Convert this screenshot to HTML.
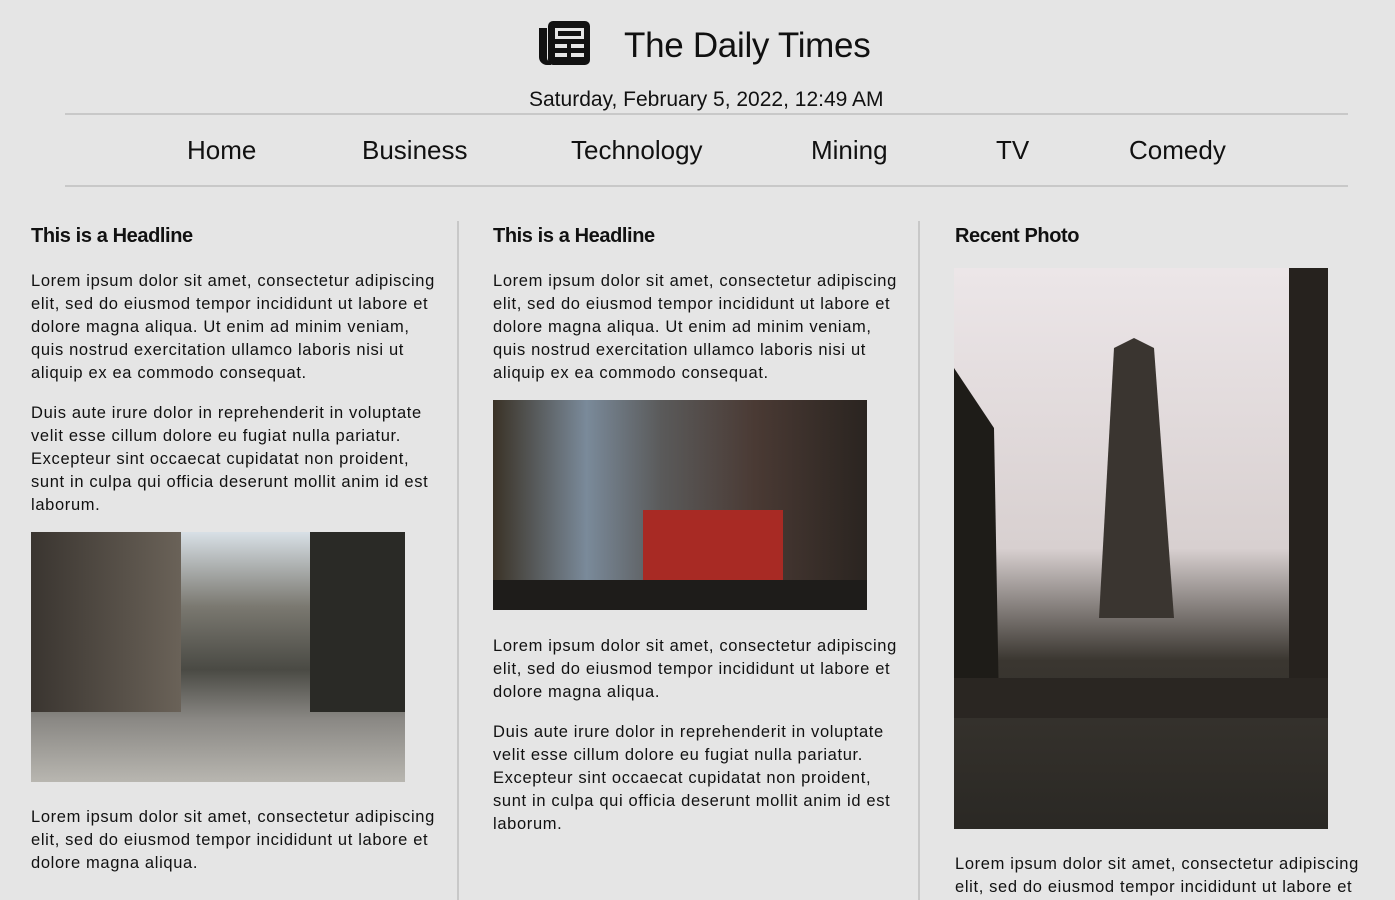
<!DOCTYPE html>
<html><head><meta charset="utf-8"><style>
body{margin:0;background:#e5e5e5;font-family:"Liberation Sans",sans-serif;color:#111;width:1395px;height:900px;overflow:hidden;position:relative}
.a{position:absolute;white-space:nowrap}
.hl{font-size:20px;font-weight:bold;letter-spacing:-0.4px}
.p{font-size:16.5px;line-height:23px;letter-spacing:0.65px}
.nav{font-size:26px;top:135px}
.line{position:absolute;left:65px;width:1283px;height:2px;background:#c8c8c8}
.vd{position:absolute;width:2px;background:#c8c8c8;top:221px;height:679px}
</style></head><body>
<svg class="a" style="left:538px;top:20px" width="53" height="46" viewBox="0 0 53 46">
<rect x="10" y="1" width="42" height="44" rx="5" fill="#111"/>
<path d="M1 8 h8 v30 a4 4 0 0 0 4 4 v3 h-4 a8 8 0 0 1 -8 -8 z" fill="#111"/>
<rect x="17" y="8" width="29" height="11" fill="#e5e5e5"/>
<rect x="20" y="11" width="23" height="5" fill="#111"/>
<rect x="17" y="24" width="12" height="4" fill="#e5e5e5"/><rect x="33" y="24" width="13" height="4" fill="#e5e5e5"/>
<rect x="17" y="33" width="12" height="4" fill="#e5e5e5"/><rect x="33" y="33" width="13" height="4" fill="#e5e5e5"/>
</svg>
<div class="a" style="left:624px;top:26px;font-size:35px;letter-spacing:-0.3px">The Daily Times</div>
<div class="a" style="left:529px;top:88px;font-size:21px">Saturday, February 5, 2022, 12:49 AM</div>
<div class="line" style="top:113px"></div>
<div class="line" style="top:185px"></div>
<div class="a nav" style="left:187px">Home</div>
<div class="a nav" style="left:362px">Business</div>
<div class="a nav" style="left:571px">Technology</div>
<div class="a nav" style="left:811px">Mining</div>
<div class="a nav" style="left:996px">TV</div>
<div class="a nav" style="left:1129px">Comedy</div>
<div class="vd" style="left:457px"></div><div class="vd" style="left:918px"></div>

<div class="a hl" style="left:31px;top:225px">This is a Headline</div>
<div class="a p" style="left:31px;top:270px">Lorem ipsum dolor sit amet, consectetur adipiscing<br>elit, sed do eiusmod tempor incididunt ut labore et<br>dolore magna aliqua. Ut enim ad minim veniam,<br>quis nostrud exercitation ullamco laboris nisi ut<br>aliquip ex ea commodo consequat.</div>
<div class="a p" style="left:31px;top:402px">Duis aute irure dolor in reprehenderit in voluptate<br>velit esse cillum dolore eu fugiat nulla pariatur.<br>Excepteur sint occaecat cupidatat non proident,<br>sunt in culpa qui officia deserunt mollit anim id est<br>laborum.</div>
<div class="a" style="left:31px;top:532px;width:374px;height:250px;background:linear-gradient(180deg,#d8e0e6 0%,#7a7870 30%,#4a4a44 55%,#8a8884 75%,#b8b6b0 100%)"><div style="position:absolute;left:0;top:0;width:150px;height:180px;background:linear-gradient(90deg,#3a3530,#6a6258)"></div><div style="position:absolute;right:0;top:0;width:95px;height:180px;background:#2a2a26"></div></div>
<div class="a p" style="left:31px;top:806px">Lorem ipsum dolor sit amet, consectetur adipiscing<br>elit, sed do eiusmod tempor incididunt ut labore et<br>dolore magna aliqua.</div>

<div class="a hl" style="left:493px;top:225px">This is a Headline</div>
<div class="a p" style="left:493px;top:270px">Lorem ipsum dolor sit amet, consectetur adipiscing<br>elit, sed do eiusmod tempor incididunt ut labore et<br>dolore magna aliqua. Ut enim ad minim veniam,<br>quis nostrud exercitation ullamco laboris nisi ut<br>aliquip ex ea commodo consequat.</div>
<div class="a" style="left:493px;top:400px;width:374px;height:210px;background:linear-gradient(90deg,#3a3226 0%,#7a8a9a 25%,#5a5a5a 45%,#4a3a34 70%,#2a2420 100%)"><div style="position:absolute;left:150px;top:110px;width:140px;height:85px;background:#a82a24"></div><div style="position:absolute;left:0;bottom:0;width:374px;height:30px;background:#1e1c1a"></div></div>
<div class="a p" style="left:493px;top:635px">Lorem ipsum dolor sit amet, consectetur adipiscing<br>elit, sed do eiusmod tempor incididunt ut labore et<br>dolore magna aliqua.</div>
<div class="a p" style="left:493px;top:721px">Duis aute irure dolor in reprehenderit in voluptate<br>velit esse cillum dolore eu fugiat nulla pariatur.<br>Excepteur sint occaecat cupidatat non proident,<br>sunt in culpa qui officia deserunt mollit anim id est<br>laborum.</div>

<div class="a hl" style="left:955px;top:225px">Recent Photo</div>
<div class="a" style="left:954px;top:268px;width:374px;height:561px;background:linear-gradient(180deg,#ece6e8 0%,#d8d0d0 50%,#3a3630 70%,#2a2824 100%)">
<svg width="374" height="561" style="position:absolute;left:0;top:0"><polygon points="145,350 160,80 180,70 200,80 220,350" fill="#3a3530"/><polygon points="0,100 40,160 45,440 0,440" fill="#1e1c18"/><polygon points="335,0 374,0 374,440 335,440" fill="#26221e"/><rect x="0" y="410" width="374" height="40" fill="#2a2622"/></svg></div>
<div class="a p" style="left:955px;top:853px">Lorem ipsum dolor sit amet, consectetur adipiscing<br>elit, sed do eiusmod tempor incididunt ut labore et</div>
</body></html>
